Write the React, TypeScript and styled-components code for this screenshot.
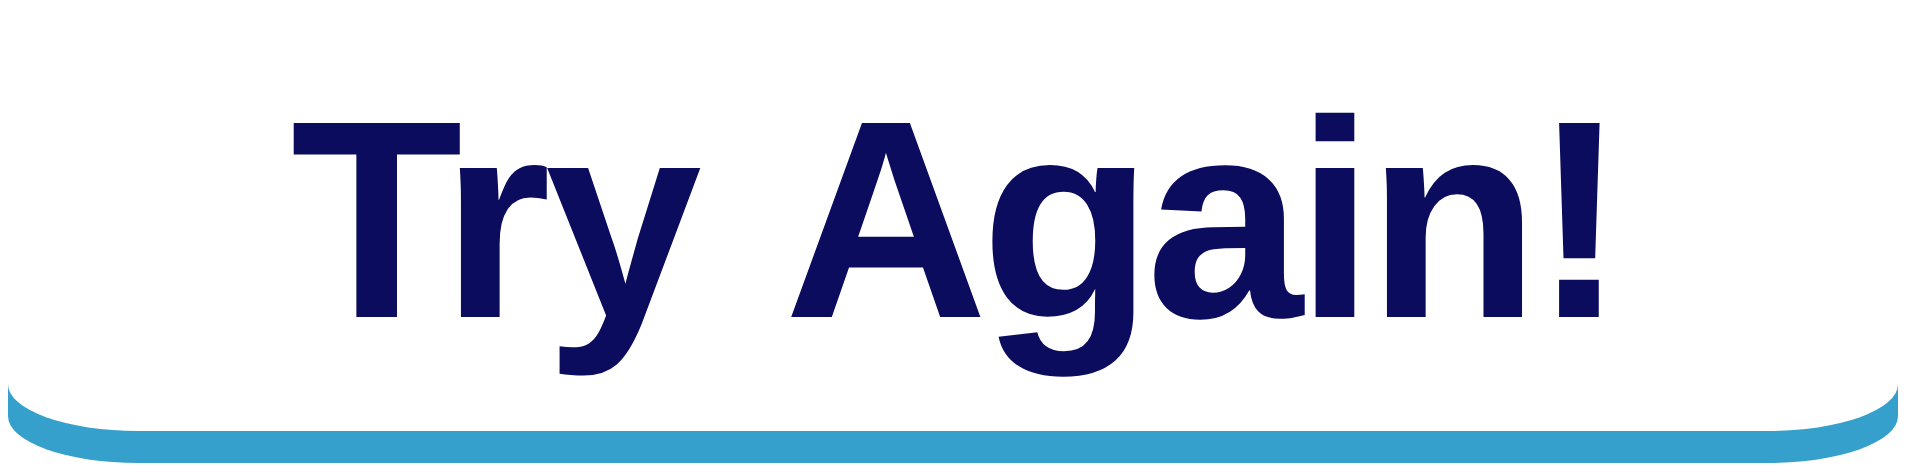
import styled, { createGlobalStyle } from 'styled-components'

const GlobalStyle = createGlobalStyle`
  html, body {
    margin: 0;
    padding: 0;
    background: #ffffff;
  }
  body {
    width: 1911px;
    height: 474px;
    overflow: hidden;
  }
`

const Stage = styled.div`
  width: 1911px;
  height: 474px;
  display: flex;
  flex-direction: column;
  align-items: flex-start;
`

const ButtonFace = styled.button`
  margin: 0 0 0 8px;
  width: 1890px;
  height: 431px;
  padding: 79px 0 0;
  border: none;
  background: #ffffff;
  border-radius: 0 0 130px 130px / 0 0 47px 47px;
  box-shadow: 0 32px 0 #36a0cc;
  display: flex;
  align-items: flex-start;
  justify-content: center;
  cursor: pointer;
`

const Label = styled.span`
  font-family: 'Liberation Sans', Arial, sans-serif;
  font-weight: 700;
  font-size: 282px;
  line-height: 1;
  color: #0b0c5e;
  white-space: pre;
  word-spacing: 16px;
  margin-left: 4px;
`

const Word = styled.span<{ $tracking: number }>`
  letter-spacing: ${p => p.$tracking}px;
`

export default function App() {
  return (
    <>
      <GlobalStyle />
      <Stage>
        <ButtonFace type="button">
          <Label>
            <Word $tracking={-6}>Try </Word>
            <Word $tracking={-7}>Again!</Word>
          </Label>
        </ButtonFace>
      </Stage>
    </>
  )
}
